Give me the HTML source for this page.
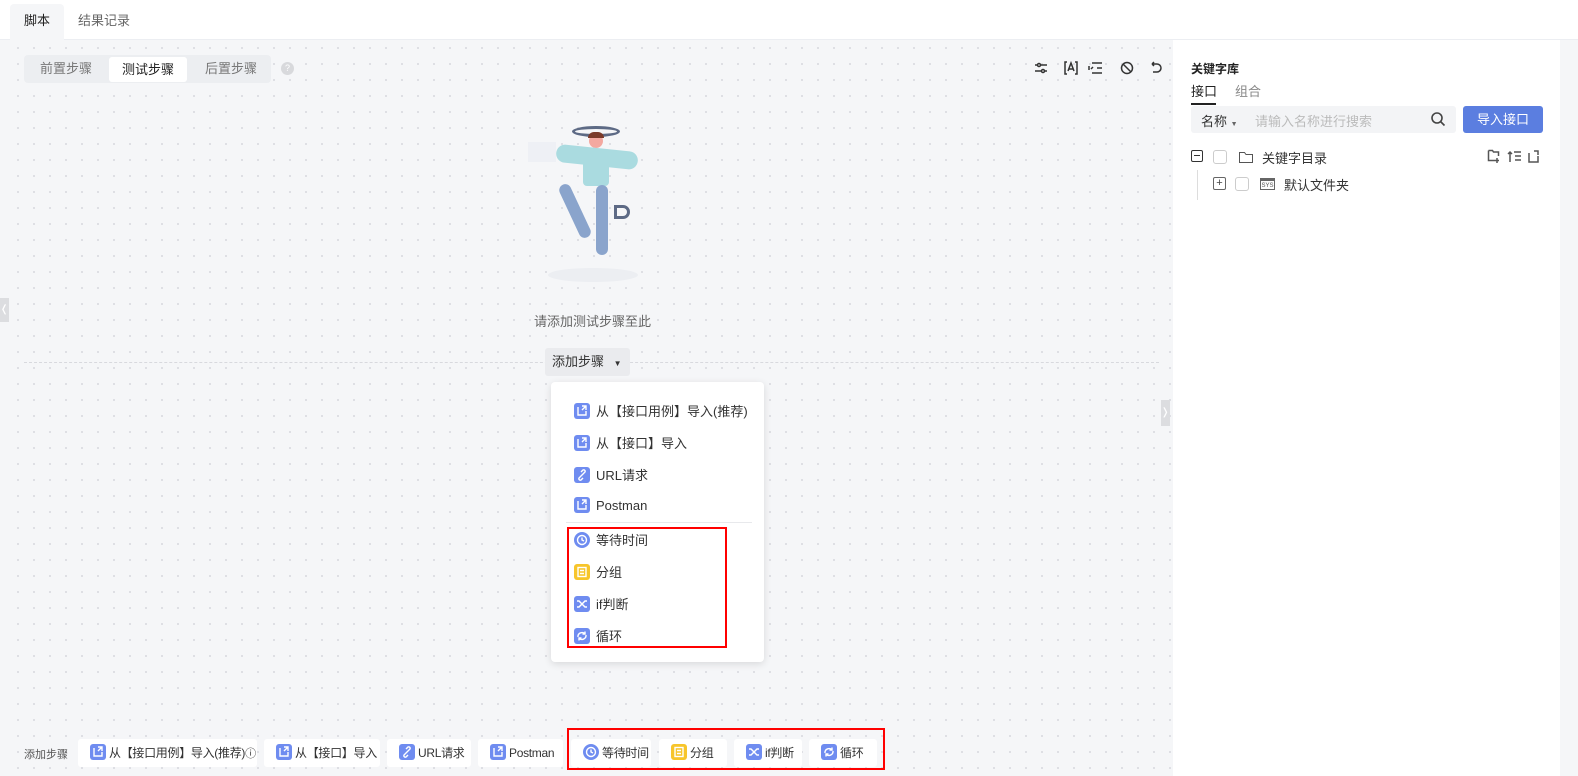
<!DOCTYPE html>
<html><head><meta charset="utf-8"><style>
*{margin:0;padding:0;box-sizing:border-box}
body{width:1578px;height:776px;overflow:hidden;background:#f5f6f8;font-family:"Liberation Sans","Noto Sans CJK SC",sans-serif;font-size:13px;color:#333;position:relative}
.abs{position:absolute;white-space:nowrap}
.top{left:0;top:0;width:1578px;height:40px;background:#fff;border-bottom:1px solid #eceef2}
.main{left:10px;top:40px;width:1163px;height:736px;background-color:#f5f6f8;background-image:radial-gradient(#dcdde2 1px,transparent 1.2px);background-size:16px 16px}
.ic{display:inline-block;width:16px;height:16px;border-radius:3px;background:#6f8cf0;vertical-align:-3px;position:relative}
.ic svg{position:absolute;left:0;top:0}
.mi{position:absolute;left:574px;font-size:13px;color:#333;white-space:nowrap}
.mi .ic{margin-right:6px}
.bb{position:absolute;top:739px;height:28px;background:#fff;border-radius:3px;font-size:12px;color:#333;line-height:28px;padding-left:12px;white-space:nowrap;letter-spacing:-0.3px}
.bb .ic{margin-right:3px;vertical-align:-3px}
</style></head><body>
<svg width="0" height="0" style="position:absolute"><defs>
<g id="imp" fill="none" stroke="#fff" stroke-width="1.4"><path d="M4 4v8h8V8M8 3h4v4M12 3L8 7"/></g>
<g id="lnk" fill="none" stroke="#fff" stroke-width="1.4"><path d="M7 9l-2 2a1.5 1.5 0 002 2l2-2M9 7l2-2a1.5 1.5 0 00-2-2L7 5M6.5 9.5l3-3"/></g>
<g id="clk" fill="none" stroke="#fff" stroke-width="1.4"><circle cx="8" cy="8" r="4.5"/><path d="M8 5.5V8l2 1"/></g>
<g id="grp" fill="none" stroke="#fff" stroke-width="1.4"><rect x="4" y="3.5" width="8" height="9"/><path d="M6 6.5h4M6 9.5h4"/></g>
<g id="iff" fill="none" stroke="#fff" stroke-width="1.4"><path d="M3 5h2l6 6h2M3 11h2l6-6h2"/></g>
<g id="lp" fill="none" stroke="#fff" stroke-width="1.4"><path d="M4 9a4 4 0 017-3M12 7a4 4 0 01-7 3M11 3.5V6H8.5M5 12.5V10h2.5"/></g>
</defs></svg>
<div class="abs top"></div>
<div class="abs" style="left:10px;top:4px;width:54px;height:36px;background:#f5f6f8;border-radius:4px 4px 0 0;line-height:34px;text-align:center;color:#222">脚本</div>
<div class="abs" style="left:78px;top:4px;line-height:34px;color:#666">结果记录</div>
<div class="abs main"></div>
<div class="abs" style="left:24px;top:55px;width:247px;height:28px;background:#eceef1;border-radius:4px"></div>
<div class="abs" style="left:40px;top:60px;color:#777;line-height:18px">前置步骤</div>
<div class="abs" style="left:109px;top:57px;width:78px;height:25px;background:#fff;border-radius:3px;text-align:center;line-height:25px;color:#222">测试步骤</div>
<div class="abs" style="left:205px;top:60px;color:#777;line-height:18px">后置步骤</div>
<div class="abs" style="left:281px;top:62px;width:13px;height:13px;border-radius:50%;background:#d8d9dc;color:#fff;font-size:9px;text-align:center;line-height:13px">?</div>
<svg class="abs" style="left:1030px;top:58px" width="140" height="20" fill="none" stroke="#333" stroke-width="1.5">
<path d="M5 7h12M5 13h12"/><circle cx="9" cy="7" r="1.5" fill="#fff"/><circle cx="13" cy="13" r="1.5" fill="#fff"/>
<path d="M37 4h-2v12h2M45 4h2v12h-2M38 13l3-8 3 8M39 11h4"/>
<path d="M62 5h10M67 10h5M62 15h10M63 9l-2 2M59 8v4"/>
<circle cx="97" cy="10" r="5.5"/><path d="M93 6l8 8"/>
<path d="M122 6h5a4 4 0 010 8h-4M122 6l2-2M122 6l2 2"/>
</svg>
<div class="abs" style="left:548px;top:268px;width:90px;height:14px;border-radius:50%;background:#eceef2"></div>
<div class="abs" style="left:528px;top:142px;width:28px;height:20px;background:#eef0f5"></div>
<div class="abs" style="left:572px;top:126px;width:48px;height:11px;border:3px solid #5d6a85;border-radius:50%"></div>
<div class="abs" style="left:589px;top:134px;width:14px;height:14px;border-radius:50%;background:#f3a8a0"></div>
<div class="abs" style="left:588px;top:132px;width:16px;height:6px;border-radius:6px 6px 0 0;background:#7a3a2a"></div>
<div class="abs" style="left:556px;top:148px;width:82px;height:18px;border-radius:9px;background:#aadbe0;transform:rotate(6deg)"></div>
<div class="abs" style="left:583px;top:150px;width:26px;height:36px;background:#aadbe0;border-radius:4px"></div>
<div class="abs" style="left:569px;top:182px;width:12px;height:58px;background:#8aa4cc;border-radius:6px;transform:rotate(-25deg)"></div>
<div class="abs" style="left:596px;top:185px;width:12px;height:70px;background:#8aa4cc;border-radius:6px"></div>
<div class="abs" style="left:614px;top:205px;width:16px;height:14px;border:3px solid #5d6a85;border-radius:0 8px 8px 0"></div>
<div class="abs" style="left:534px;top:311px;color:#666;font-size:13px">请添加测试步骤至此</div>
<div class="abs" style="left:24px;top:362px;width:1135px;border-top:1px dashed #d8d9de"></div>
<div class="abs" style="left:545px;top:348px;width:85px;height:28px;background:#eaebee;border-radius:3px;line-height:28px;padding-left:7px;color:#333">添加步骤 <span style="font-size:8px;margin-left:6px">▼</span></div>
<div class="abs" style="left:0;top:298px;width:9px;height:24px;background:#dcdde0;color:#fff;font-size:10px;line-height:24px">❬</div>
<div class="abs" style="left:1161px;top:400px;width:9px;height:26px;background:#dcdde0;color:#fff;font-size:10px;line-height:26px">❭</div>
<div class="abs" style="left:551px;top:382px;width:213px;height:280px;background:#fff;border-radius:4px;box-shadow:0 2px 8px rgba(0,0,0,.12)"></div>
<div class="abs" style="left:566px;top:522px;width:186px;border-top:1px solid #e8e9ec"></div>
<div class="mi" style="top:401px"><span class="ic"><svg width="16" height="16"><use href="#imp"/></svg></span>从【接口用例】导入(推荐)</div>
<div class="mi" style="top:433px"><span class="ic"><svg width="16" height="16"><use href="#imp"/></svg></span>从【接口】导入</div>
<div class="mi" style="top:465px"><span class="ic"><svg width="16" height="16"><use href="#lnk"/></svg></span>URL请求</div>
<div class="mi" style="top:497px"><span class="ic"><svg width="16" height="16"><use href="#imp"/></svg></span>Postman</div>
<div class="mi" style="top:530px"><span class="ic" style="border-radius:50%"><svg width="16" height="16"><use href="#clk"/></svg></span>等待时间</div>
<div class="mi" style="top:562px"><span class="ic" style="background:#f7c52b"><svg width="16" height="16"><use href="#grp"/></svg></span>分组</div>
<div class="mi" style="top:594px"><span class="ic"><svg width="16" height="16"><use href="#iff"/></svg></span>if判断</div>
<div class="mi" style="top:626px"><span class="ic"><svg width="16" height="16"><use href="#lp"/></svg></span>循环</div>
<div class="abs" style="left:567px;top:527px;width:160px;height:121px;border:2px solid #f00"></div>
<div class="abs" style="left:24px;top:746px;font-size:11px;color:#555">添加步骤</div>
<div class="bb" style="left:78px;width:179px"><span class="ic"><svg width="16" height="16"><use href="#imp"/></svg></span>从【接口用例】导入(推荐)<span style="font-size:11px">ⓘ</span></div>
<div class="bb" style="left:264px;width:116px"><span class="ic"><svg width="16" height="16"><use href="#imp"/></svg></span>从【接口】导入</div>
<div class="bb" style="left:387px;width:84px"><span class="ic"><svg width="16" height="16"><use href="#lnk"/></svg></span>URL请求</div>
<div class="bb" style="left:478px;width:85px"><span class="ic"><svg width="16" height="16"><use href="#imp"/></svg></span>Postman</div>
<div class="bb" style="left:571px;width:80px"><span class="ic" style="border-radius:50%"><svg width="16" height="16"><use href="#clk"/></svg></span>等待时间</div>
<div class="bb" style="left:659px;width:68px"><span class="ic" style="background:#f7c52b"><svg width="16" height="16"><use href="#grp"/></svg></span>分组</div>
<div class="bb" style="left:734px;width:68px"><span class="ic"><svg width="16" height="16"><use href="#iff"/></svg></span>if判断</div>
<div class="bb" style="left:809px;width:68px"><span class="ic"><svg width="16" height="16"><use href="#lp"/></svg></span>循环</div>
<div class="abs" style="left:567px;top:728px;width:318px;height:42px;border:2px solid #f00"></div>
<div class="abs" style="left:1173px;top:40px;width:387px;height:736px;background:#fff"></div>
<div class="abs" style="left:1560px;top:40px;width:18px;height:736px;background:#f5f6f8"></div>
<div class="abs" style="left:1191px;top:60px;font-weight:bold;font-size:12px;color:#222">关键字库</div>
<div class="abs" style="left:1191px;top:81px;font-size:13px;color:#222">接口</div>
<div class="abs" style="left:1191px;top:103px;width:25px;border-top:2px solid #222"></div>
<div class="abs" style="left:1235px;top:81px;font-size:13px;color:#888">组合</div>
<div class="abs" style="left:1191px;top:106px;width:265px;height:27px;background:#f3f4f6;border-radius:3px"></div>
<div class="abs" style="left:1201px;top:111px;color:#333">名称 <span style="font-size:7px;color:#666">▼</span></div>
<div class="abs" style="left:1255px;top:111px;color:#bbb">请输入名称进行搜索</div>
<svg class="abs" style="left:1430px;top:111px" width="16" height="16" fill="none" stroke="#444" stroke-width="1.6"><circle cx="7" cy="7" r="5"/><path d="M11 11l3.5 3.5"/></svg>
<div class="abs" style="left:1463px;top:106px;width:80px;height:27px;background:#5b7ee0;border-radius:3px;color:#fff;text-align:center;line-height:27px">导入接口</div>
<div class="abs" style="left:1191px;top:150px;width:12px;height:12px;border:1px solid #333;border-radius:2px"></div>
<div class="abs" style="left:1194px;top:155px;width:6px;border-top:1.5px solid #333"></div>
<div class="abs" style="left:1213px;top:150px;width:14px;height:14px;border:1px solid #ccc;border-radius:3px"></div>
<svg class="abs" style="left:1238px;top:150px" width="16" height="14" fill="none" stroke="#555"><path d="M1.5 2.5h5l1.5 2h6.5v8h-13z"/></svg>
<div class="abs" style="left:1262px;top:148px;color:#333">关键字目录</div>
<svg class="abs" style="left:1487px;top:148px" width="56" height="16" fill="none" stroke="#555" stroke-width="1.5"><path d="M1.5 2.5h4l1 1.5h5v4M1.5 2.5v10h7M10 10v5M8 12.5h4"/><path d="M23 4v10M21 6l2-2 2 2M27 4h7M28 8h6M28 12h6"/><path d="M42 5v9h9V8M47 3h4v4"/></svg>
<div class="abs" style="left:1197px;top:170px;height:30px;border-left:1px solid #ddd"></div>
<div class="abs" style="left:1213px;top:177px;width:13px;height:13px;border:1px solid #666;border-radius:2px;font-size:11px;line-height:11px;text-align:center;color:#444">+</div>
<div class="abs" style="left:1235px;top:177px;width:14px;height:14px;border:1px solid #ccc;border-radius:3px"></div>
<div class="abs" style="left:1260px;top:178px;width:15px;height:12px;border:1px solid #666;font-size:6px;line-height:11px;text-align:center;color:#555;border-top-width:3px">SYS</div>
<div class="abs" style="left:1284px;top:175px;color:#333">默认文件夹</div>
</body></html>
